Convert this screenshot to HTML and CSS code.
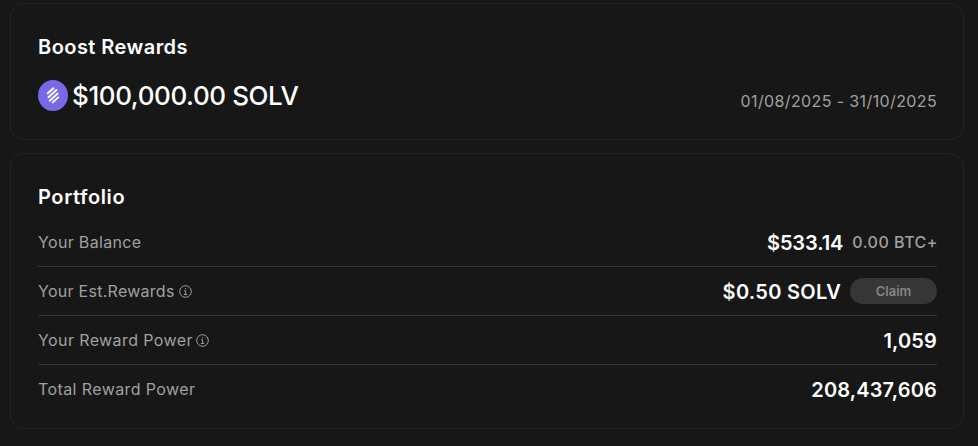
FILE: index.html
```
<!DOCTYPE html>
<html lang="en">
<head>
    <meta charset="UTF-8">
    <meta name="viewport" content="width=device-width, initial-scale=1.0">
    <title>Boost Rewards</title>
    <link rel="stylesheet" href="styles.css">
</head>
<body>
    <section class="card rewards">
        <h2 class="boost-title">Boost Rewards</h2>
        <div class="rewards-row">
            <div class="total">
                <svg class="coin" viewBox="0 0 30 31">
                    <ellipse cx="15" cy="15.5" rx="15" ry="15.5" fill="#7768e5"/>
                    <g stroke="#fff" stroke-width="1.9" stroke-linecap="round">
                        <path d="M9.8 13.3L15.4 8.3"/>
                        <path d="M10.4 17.2L18.4 10"/>
                        <path d="M11.7 20.7L19.7 13.5"/>
                        <path d="M14.7 22.4L20.3 17.4"/>
                    </g>
                </svg>
                <span class="amount">$100,000.00 SOLV</span>
            </div>
            <span class="dates">01/08/2025 - 31/10/2025</span>
        </div>
    </section>

    <section class="card portfolio">
        <h2 class="portfolio-title">Portfolio</h2>
        <div class="row">
            <span class="label balance-label">Your Balance</span>
            <div class="values">
                <span class="value balance">$533.14</span>
                <span class="btc">0.00 BTC+</span>
            </div>
        </div>
        <div class="row">
            <span class="label est-label">Your Est.Rewards</span>
            <svg class="info" viewBox="0 0 13 13" fill="none" stroke="#a0a0a0">
                <circle cx="6.5" cy="6.5" r="5.8"/>
                <path d="M5.2 5.7H6.6V9.3M4.9 9.4H8.3M6 3.7H7.1"/>
            </svg>
            <div class="values">
                <span class="value solv">$0.50 SOLV</span>
                <button class="claim" disabled>Claim</button>
            </div>
        </div>
        <div class="row">
            <span class="label power-label">Your Reward Power</span>
            <svg class="info" viewBox="0 0 13 13" fill="none" stroke="#a0a0a0">
                <circle cx="6.5" cy="6.5" r="5.8"/>
                <path d="M5.2 5.7H6.6V9.3M4.9 9.4H8.3M6 3.7H7.1"/>
            </svg>
            <div class="values">
                <span class="value power">1,059</span>
            </div>
        </div>
        <div class="row">
            <span class="label total-label">Total Reward Power</span>
            <div class="values">
                <span class="value total-power">208,437,606</span>
            </div>
        </div>
    </section>
</body>
</html>
```
FILE: styles.css
```
* {
    box-sizing: border-box;
}

body {
    display: flex;
    flex-direction: column;
    gap: 13px;
    height: 446px;
    margin: 0;
    padding: 3px 14px 0 10px;
    overflow: hidden;
    font-family: Inter, "Liberation Sans", sans-serif;
    background-color: #171717;
    color: #fff;
}

.card {
    border: 1px solid #242424;
    border-radius: 14px;
    padding: 0 26px 0 27px;
}

.rewards {
    height: 137px;
    padding-top: 31px;
}

.portfolio {
    height: 276px;
    padding-top: 31px;
}

h2 {
    margin: 0;
    font-size: 20px;
    font-weight: 600;
    line-height: 24px;
}

.boost-title {
    letter-spacing: 0.45px;
}

.portfolio-title {
    margin-bottom: 9px;
    letter-spacing: 0.6px;
}

.rewards-row {
    display: flex;
    justify-content: space-between;
    margin-top: 16px;
}

.total {
    display: flex;
    align-items: center;
    gap: 4px;
    height: 41px;
}

.coin {
    width: 30px;
    height: 31px;
}

.amount {
    font-size: 26px;
    font-weight: 500;
    line-height: 41px;
    letter-spacing: -0.4px;
}

.dates {
    margin-top: 14px;
    font-size: 16px;
    line-height: 24px;
    letter-spacing: 0.38px;
    color: #a0a0a0;
}

.row {
    display: flex;
    align-items: center;
    height: 49px;
    border-bottom: 1px solid #363636;
}

.row:last-child {
    height: 48px;
    border-bottom: none;
}

.label {
    font-size: 16px;
    letter-spacing: 0.4px;
    color: #a0a0a0;
}

.balance-label {
    letter-spacing: 0.33px;
}

.est-label {
    letter-spacing: 0.27px;
}

.info {
    width: 13px;
    height: 13px;
    margin-left: 4px;
}

.power-label + .info {
    margin-left: 3px;
}

.values {
    display: flex;
    align-items: center;
    gap: 9px;
    margin-left: auto;
}

.value {
    padding-top: 2px;
    font-size: 20px;
    font-weight: 600;
    line-height: 24px;
    letter-spacing: 0.15px;
}

.balance {
    letter-spacing: -0.1px;
}

.solv {
    letter-spacing: 0.3px;
}

.btc {
    font-size: 16px;
    font-weight: 500;
    letter-spacing: 0.5px;
    margin-right: -1px;
    color: #a0a0a0;
}

.claim {
    width: 87px;
    height: 26px;
    padding: 0;
    border: none;
    border-radius: 13px;
    font-family: inherit;
    font-size: 13px;
    font-weight: 600;
    background-color: #363636;
    color: #858585;
}
```
